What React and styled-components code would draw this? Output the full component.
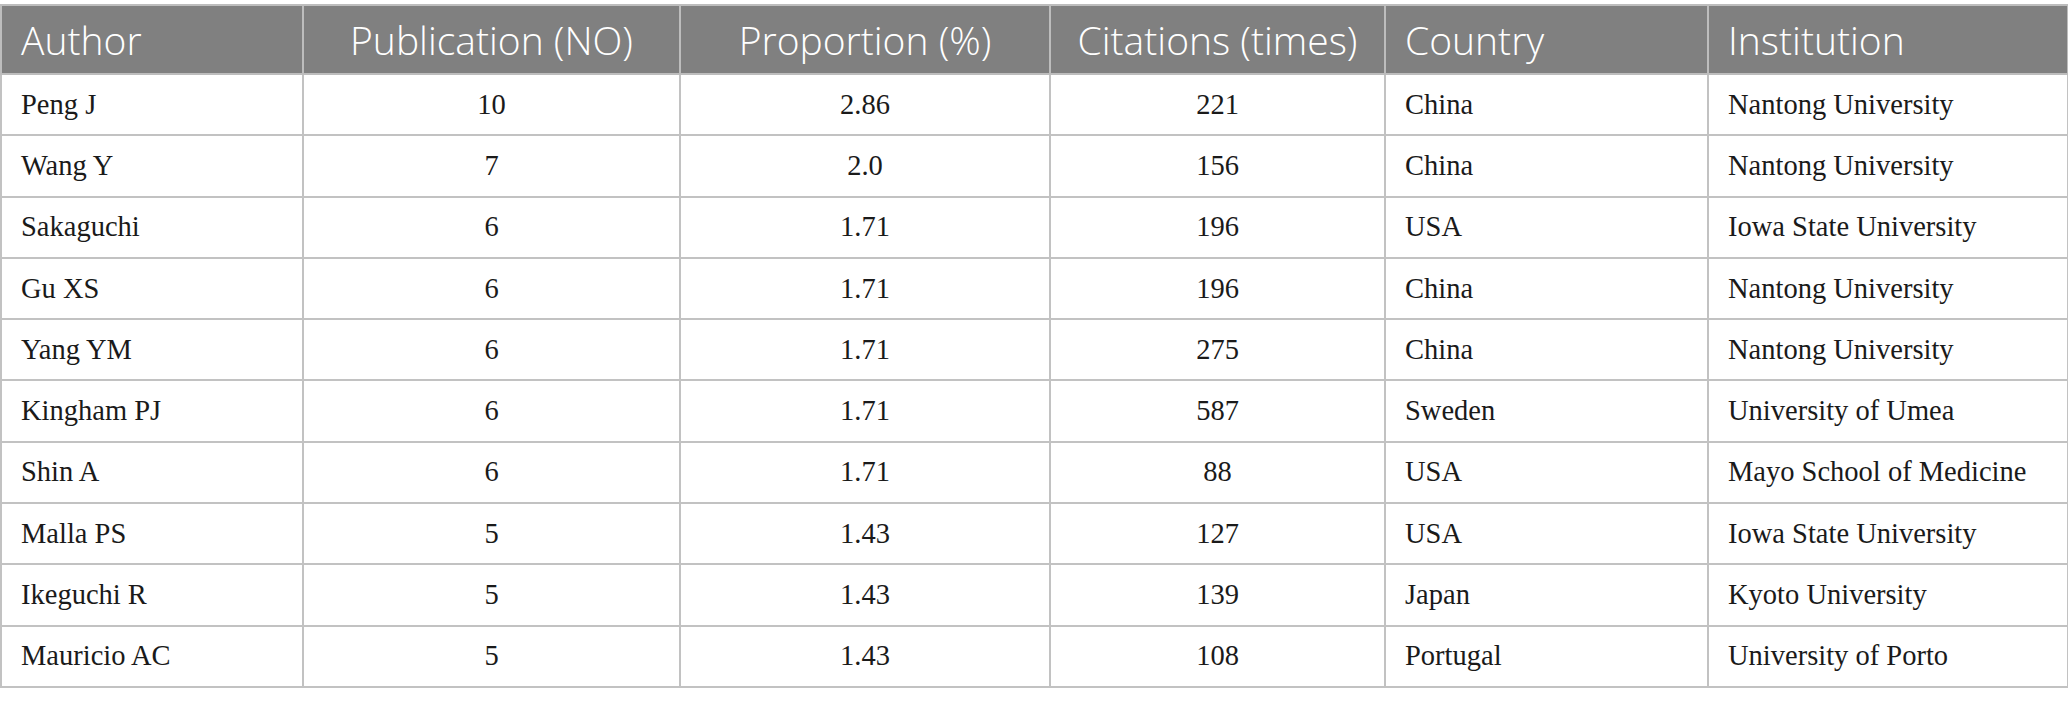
import React from 'react';
import styled, { createGlobalStyle } from 'styled-components';

const GlobalStyle = createGlobalStyle`
  html, body {
    margin: 0;
    padding: 0;
    background: #ffffff;
  }
`;

const Page = styled.div`
  width: 2068px;
  padding-top: 4px;
`;

const Table = styled.table`
  width: 2067px;
  border-collapse: collapse;
  table-layout: fixed;
`;

const HeadCell = styled.th`
  height: 67px;
  padding: 0 19px;
  background: #808080;
  color: #ffffff;
  font-family: "Open Sans", "Noto Sans", sans-serif;
  font-weight: 300;
  font-size: 39px;
  text-align: ${({ align }) => align || 'left'};
  border: 2px solid #bdbdbd;
  white-space: nowrap;
`;

const Cell = styled.td`
  height: 59.3px;
  padding: 0 19px;
  color: #1a1a1a;
  font-family: "Liberation Serif", "Times New Roman", serif;
  font-size: 28.5px;
  text-align: ${({ align }) => align || 'left'};
  border: 2px solid #c2c2c2;
  white-space: nowrap;
`;

const columns = [
  { title: 'Author', width: 302, align: 'left' },
  { title: 'Publication (NO)', width: 377, align: 'center' },
  { title: 'Proportion (%)', width: 370, align: 'center' },
  { title: 'Citations (times)', width: 335, align: 'center' },
  { title: 'Country', width: 323, align: 'left' },
  { title: 'Institution', width: 360, align: 'left' },
];

const rows = [
  ['Peng J', '10', '2.86', '221', 'China', 'Nantong University'],
  ['Wang Y', '7', '2.0', '156', 'China', 'Nantong University'],
  ['Sakaguchi', '6', '1.71', '196', 'USA', 'Iowa State University'],
  ['Gu XS', '6', '1.71', '196', 'China', 'Nantong University'],
  ['Yang YM', '6', '1.71', '275', 'China', 'Nantong University'],
  ['Kingham PJ', '6', '1.71', '587', 'Sweden', 'University of Umea'],
  ['Shin A', '6', '1.71', '88', 'USA', 'Mayo School of Medicine'],
  ['Malla PS', '5', '1.43', '127', 'USA', 'Iowa State University'],
  ['Ikeguchi R', '5', '1.43', '139', 'Japan', 'Kyoto University'],
  ['Mauricio AC', '5', '1.43', '108', 'Portugal', 'University of Porto'],
];

const App = () => (
  <Page>
    <GlobalStyle />
    <Table>
      <colgroup>
        {columns.map((c) => (
          <col key={c.title} style={{ width: c.width }} />
        ))}
      </colgroup>
      <thead>
        <tr>
          {columns.map((c) => (
            <HeadCell key={c.title} align={c.align}>{c.title}</HeadCell>
          ))}
        </tr>
      </thead>
      <tbody>
        {rows.map((r) => (
          <tr key={r[0]}>
            {r.map((v, i) => (
              <Cell key={i} align={columns[i].align}>{v}</Cell>
            ))}
          </tr>
        ))}
      </tbody>
    </Table>
  </Page>
);

export default App;
